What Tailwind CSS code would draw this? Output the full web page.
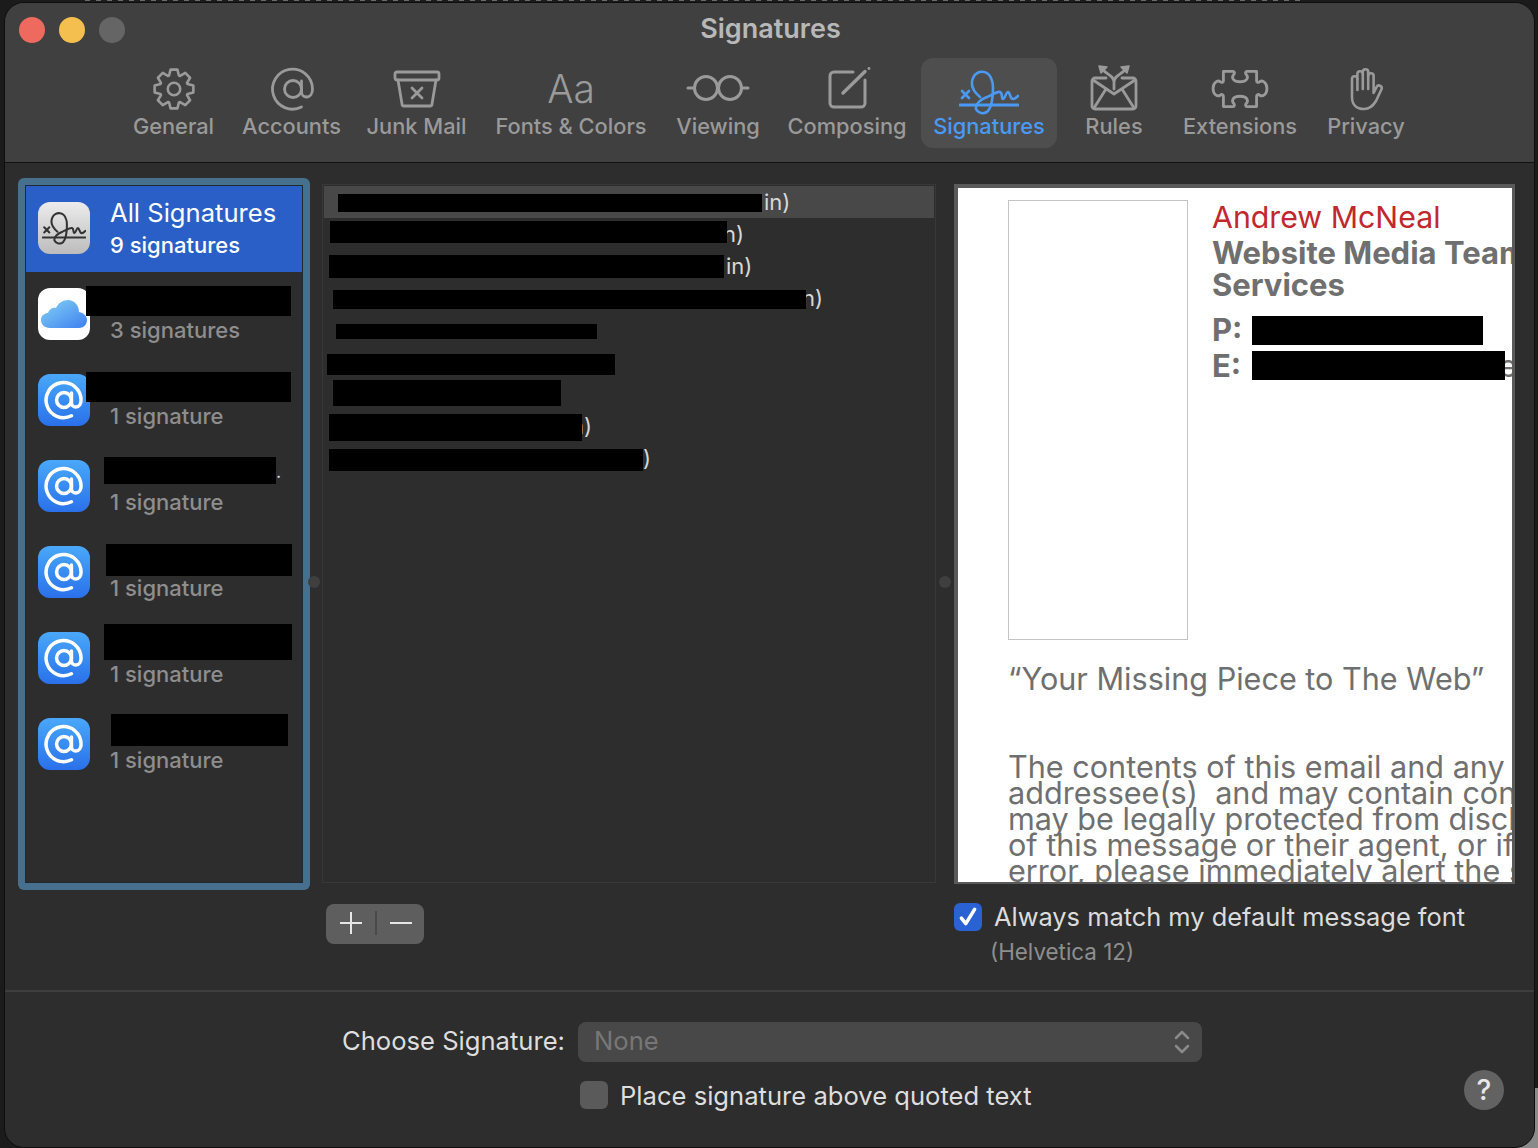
<!DOCTYPE html>
<html lang="en">
<head>
  <meta charset="UTF-8" />
  <title>Signatures</title>
  <script src="https://cdn.jsdelivr.net/npm/@tailwindcss/browser@4"></script>
</head>
<body class="bg-[#1b1b1b] font-['Inter','Liberation_Sans',sans-serif]">
<div class="relative w-[1538px] h-[1148px] overflow-hidden">
  <div class="absolute right-0 bottom-0 w-[40px] h-[60px] bg-[#8a8a8a]"></div>
  <!-- bit of the window behind, showing over the top edge -->
  <div class="absolute top-0 left-[85px] w-[1215px] h-[1px] bg-[repeating-linear-gradient(90deg,#6a6a6a_0_5px,transparent_5px_11px)]"></div>

  <!-- window -->
  <div class="relative ml-[4px] mt-[2px] w-[1531px] h-[1146px] rounded-t-[20px] rounded-b-[20px] border border-[#0e0e0e] overflow-hidden bg-[#2d2d2d] flex flex-col">

    <!-- toolbar -->
    <div class="relative h-[160px] bg-[#404040] border-b border-[#111111] shrink-0">
      <div class="flex gap-[14px] pl-[14px] pt-[14px]">
        <div class="w-[26px] h-[26px] rounded-full bg-[#ee6a5f]"></div>
        <div class="w-[26px] h-[26px] rounded-full bg-[#f5bf4f]"></div>
        <div class="w-[26px] h-[26px] rounded-full bg-[#656565]"></div>
      </div>
      <div class="absolute top-[8px] left-0 w-full text-center text-[27px] leading-[36px] font-semibold text-[#b8b8b8]"><span class="relative left-[1px]">Signatures</span></div>

      <div class="absolute top-[55px] left-[116px] flex text-[21.8px] leading-[28px] font-medium text-[#9a9a9a]">
        <!-- General -->
        <div class="w-[105px] flex flex-col items-center">
          <div class="h-[62px] flex items-center justify-center">
            <svg width="46" height="46" viewBox="0 0 48 48" fill="none" stroke="#9a9a9a" stroke-width="2.7" stroke-linejoin="round"><g transform="translate(24 24)"><polygon points="-5.13,-14.1 -3.56,-20.19 3.56,-20.19 5.13,-14.1 6.34,-13.59 11.76,-16.79 16.79,-11.76 13.59,-6.34 14.1,-5.13 20.19,-3.56 20.19,3.56 14.1,5.13 13.59,6.34 16.79,11.76 11.76,16.79 6.34,13.59 5.13,14.1 3.56,20.19 -3.56,20.19 -5.13,14.1 -6.34,13.59 -11.76,16.79 -16.79,11.76 -13.59,6.34 -14.1,5.13 -20.19,3.56 -20.19,-3.56 -14.1,-5.13 -13.59,-6.34 -16.79,-11.76 -11.76,-16.79 -6.34,-13.59"/><circle r="6.5"/></g></svg>
          </div>
          <div class="mt-[-8px]">General</div>
        </div>
        <!-- Accounts -->
        <div class="ml-[5px] w-[121px] flex flex-col items-center">
          <div class="h-[62px] flex items-center justify-center">
            <svg width="48" height="48" viewBox="-1 0 48 48" fill="none" stroke="#9a9a9a" stroke-width="2.8" stroke-linecap="round"><circle cx="24" cy="24" r="8.5"/><path d="M32.5 16v11a5 5 0 0 0 5 5c4 0 6-4 6-8a20 20 0 1 0-11 18"/></svg>
          </div>
          <div class="mt-[-8px]">Accounts</div>
        </div>
        <!-- Junk Mail -->
        <div class="ml-[3px] w-[123px] flex flex-col items-center">
          <div class="h-[62px] flex items-center justify-center">
            <svg width="50" height="48" viewBox="0 0 50 48" fill="none" stroke="#9a9a9a" stroke-width="2.8" stroke-linecap="round" stroke-linejoin="round"><rect x="3" y="7" width="44" height="8" rx="2"/><path d="M6 15l4 24a2 2 0 0 0 2 2h26a2 2 0 0 0 2-2l4-24"/><path d="M20 23l10 10M30 23L20 33"/></svg>
          </div>
          <div class="mt-[-8px]">Junk Mail</div>
        </div>
        <!-- Fonts -->
        <div class="ml-[4px] w-[178px] flex flex-col items-center">
          <div class="h-[62px] flex items-center justify-center text-[39px] font-light leading-[48px]">Aa</div>
          <div class="mt-[-8px]">Fonts &amp; Colors</div>
        </div>
        <!-- Viewing -->
        <div class="ml-[5px] w-[106px] flex flex-col items-center">
          <div class="h-[62px] flex items-center justify-center">
            <svg width="64" height="48" viewBox="0 0 64 48" fill="none" stroke="#9a9a9a" stroke-width="3" stroke-linecap="round"><circle cx="20" cy="23" r="11.5"/><circle cx="44" cy="23" r="11.5"/><path d="M31.5 22h1M2 23h6M56 23h6"/></svg>
          </div>
          <div class="mt-[-8px]">Viewing</div>
        </div>
        <!-- Composing -->
        <div class="ml-[5px] w-[142px] flex flex-col items-center">
          <div class="h-[62px] flex items-center justify-center">
            <svg width="48" height="48" viewBox="-1 0 48 48" fill="none" stroke="#9a9a9a" stroke-width="3" stroke-linecap="round"><path d="M29 7H10a4 4 0 0 0-4 4v27a4 4 0 0 0 4 4h27a4 4 0 0 0 4-4V15"/><path d="M19 28L41 6.5" stroke-width="3.4"/><circle cx="45" cy="3.5" r="1.4" fill="#9a9a9a" stroke="none"/></svg>
          </div>
          <div class="mt-[-8px]">Composing</div>
        </div>
        <!-- Signatures (selected) -->
        <div class="ml-[3px] w-[136px] h-[90px] rounded-[12px] bg-[#4e4e4e] flex flex-col items-center text-[#4a9af5]">
          <div class="h-[62px] flex items-center justify-center pt-[6px]">
            <svg width="60" height="48" viewBox="0 0 60 48" fill="none" stroke="#4a9af5" stroke-width="2.6" stroke-linecap="round" stroke-linejoin="round"><path d="M1 37H59" stroke-width="3"/><path d="M3 23l7 7M10 23l-7 7"/><path d="M21 29C15 24 11 17 14 10C16 5 21 3 25 4C31 5 34 12 34 20C34 29 33 38 29 43C25 47 19 45 17 41C16 36 22 31 28 29C33 27 38 23 41 24C44 25 42 31 44 31C46 31 47 24 49 24C51 24 51 31 54 31C56 31 58 29 59 28"/></svg>
          </div>
          <div class="mt-[-8px]">Signatures</div>
        </div>
        <!-- Rules -->
        <div class="ml-[5px] w-[104px] flex flex-col items-center">
          <div class="h-[62px] flex items-center justify-center">
            <svg width="48" height="48" viewBox="0 0 48 48" fill="none" stroke="#9a9a9a" stroke-width="2.8" stroke-linecap="round" stroke-linejoin="round"><path d="M16 13H5a3 3 0 0 0-3 3v25a3 3 0 0 0 3 3h38a3 3 0 0 0 3-3V16a3 3 0 0 0-3-3H32"/><path d="M3 15l21 14 21-14M4 43l12-19M44 43L32 24"/><path d="M24 24V17C24 11 18 10 13 5M24 17C24 11 30 10 35 5"/><path d="M9 1l8 1-6 6zM39 1l-8 1 6 6z" fill="#9a9a9a" stroke-width="1.5"/></svg>
          </div>
          <div class="mt-[-8px]">Rules</div>
        </div>
        <!-- Extensions -->
        <div class="ml-[5px] w-[138px] flex flex-col items-center">
          <div class="h-[62px] flex items-center justify-center">
            <svg width="58" height="40" viewBox="0 0 56 38" fill="none" stroke="#9a9a9a" stroke-width="2.7" stroke-linejoin="round"><path d="M12 2h9c2 0 2 2 1 3c-2 2-2 7 6 7c8 0 8-5 6-7c-1-1-1-3 1-3h9V11c0 2 2 2 3 1c3-2 7 1 7 6.5c0 5.5-4 8.5-7 6.5c-1-1-3-1-3 1V36h-9c-2 0-2-2-1-3c2-2 2-7-6-7c-8 0-8 5-6 7c1 1 1 3-1 3h-9V26c0-2-2-2-3-1c-3 2-7-1-7-6.5c0-5.5 4-8.5 7-6.5c1 1 3 1 3-1z"/></svg>
          </div>
          <div class="mt-[-8px]">Extensions</div>
        </div>
        <!-- Privacy -->
        <div class="ml-[7px] w-[100px] flex flex-col items-center">
          <div class="h-[62px] flex items-center justify-center">
            <svg width="33" height="43" viewBox="0 0 33 43" fill="none" stroke="#9a9a9a" stroke-width="2.6" stroke-linecap="round" stroke-linejoin="round"><path d="M2 29V11a2.7 2.7 0 0 1 5.4 0V6a2.7 2.7 0 0 1 5.4 0V4a2.7 2.7 0 0 1 5.4 0V8a2.7 2.7 0 0 1 5.4 0V25l3-6c1.5-3 6-1 5 2L26 33C23 38 19 41 14 41C7 41 2 37 2 29Z"/><path d="M7.4 11V22M12.8 6V21M18.2 4V21"/></svg>
          </div>
          <div class="mt-[-8px]">Privacy</div>
        </div>
      </div>
    </div>

    <!-- panels -->
    <div class="relative h-[829px] shrink-0 flex border-b-2 border-[#3e3e3e]">

      <!-- accounts list -->
      <div class="ml-[13px] mt-[15px] w-[292px] h-[712px] rounded-[6px] bg-[#47708f] p-[7px] shrink-0">
        <div class="h-full bg-[#2d2d2d] border border-[#1f2a33]">
          <div class="relative h-[86px] bg-[#2a5fc7] flex items-center pl-[12px]">
            <div class="w-[52px] h-[52px] mt-[-2px] rounded-[12px] bg-gradient-to-b from-[#ececec] to-[#bcbcbc] flex items-center justify-center">
              <svg width="44" height="36" viewBox="0 0 60 48" fill="none" stroke="#333333" stroke-width="2.8" stroke-linecap="round" stroke-linejoin="round"><path d="M1 37H59"/><path d="M3 23l7 7M10 23l-7 7"/><path d="M21 29C15 24 11 17 14 10C16 5 21 3 25 4C31 5 34 12 34 20C34 29 33 38 29 43C25 47 19 45 17 41C16 36 22 31 28 29C33 27 38 23 41 24C44 25 42 31 44 31C46 31 47 24 49 24C51 24 51 31 54 31C56 31 58 29 59 28"/></svg>
            </div>
            <div class="ml-[20px] mt-[-1px]">
              <div class="relative top-[-1px] text-[25.6px] leading-[32px] text-white">All Signatures</div>
              <div class="text-[22px] leading-[30px] font-medium text-white">9 signatures</div>
            </div>
          </div>
          <div class="relative h-[86px] flex items-center pl-[12px]">
            <div class="w-[52px] h-[52px] mt-[-2px] rounded-[12px] bg-white flex items-center justify-center">
              <svg width="46" height="30" viewBox="0 0 46 30"><defs><linearGradient id="cloud" x1="0" y1="0" x2="1" y2="1"><stop offset="0" stop-color="#86d3f5"/><stop offset="1" stop-color="#3d7ff0"/></linearGradient></defs><path fill="url(#cloud)" d="M9 29C3 29 0 25 0 21C0 16 4 14 7 14C8 10 12 8 15 9C17 4 22 1 27 1C33 1 38 6 38 13C43 14 46 17 46 21C46 26 42 29 38 29Z"/></svg>
            </div>
            <div class="ml-[20px] pt-[30px] text-[22px] leading-[30px] font-medium text-[#8e8e8e]">3 signatures</div>
            <div class="absolute left-[60px] top-[14px] w-[205px] h-[30px] bg-black"></div>
          </div>
          <div class="relative h-[86px] flex items-center pl-[12px]">
            <div class="w-[52px] h-[52px] mt-[-2px] rounded-[12px] bg-gradient-to-b from-[#4aa8fa] to-[#2b70ea] flex items-center justify-center">
              <svg width="42" height="42" viewBox="0 0 48 48" fill="none" stroke="#ffffff" stroke-width="4" stroke-linecap="round"><circle cx="24" cy="24" r="8.5"/><path d="M32.5 16v11a5 5 0 0 0 5 5c4 0 6-4 6-8a20 20 0 1 0-11 18"/></svg>
            </div>
            <div class="ml-[20px] pt-[30px] text-[22px] leading-[30px] font-medium text-[#8e8e8e]">1 signature</div>
            <div class="absolute left-[60px] top-[14px] w-[205px] h-[30px] bg-black"></div>
          </div>
          <div class="relative h-[86px] flex items-center pl-[12px]">
            <div class="w-[52px] h-[52px] mt-[-2px] rounded-[12px] bg-gradient-to-b from-[#4aa8fa] to-[#2b70ea] flex items-center justify-center">
              <svg width="42" height="42" viewBox="0 0 48 48" fill="none" stroke="#ffffff" stroke-width="4" stroke-linecap="round"><circle cx="24" cy="24" r="8.5"/><path d="M32.5 16v11a5 5 0 0 0 5 5c4 0 6-4 6-8a20 20 0 1 0-11 18"/></svg>
            </div>
            <div class="ml-[20px] pt-[30px] text-[22px] leading-[30px] font-medium text-[#8e8e8e]">1 signature</div>
            <div class="absolute left-[78px] top-[13px] w-[172px] h-[27px] bg-black"></div>
            <div class="absolute left-[250px] top-[16px] text-[18px] leading-[24px] text-[#d8d8d8]">.</div>
          </div>
          <div class="relative h-[86px] flex items-center pl-[12px]">
            <div class="w-[52px] h-[52px] mt-[-2px] rounded-[12px] bg-gradient-to-b from-[#4aa8fa] to-[#2b70ea] flex items-center justify-center">
              <svg width="42" height="42" viewBox="0 0 48 48" fill="none" stroke="#ffffff" stroke-width="4" stroke-linecap="round"><circle cx="24" cy="24" r="8.5"/><path d="M32.5 16v11a5 5 0 0 0 5 5c4 0 6-4 6-8a20 20 0 1 0-11 18"/></svg>
            </div>
            <div class="ml-[20px] pt-[30px] text-[22px] leading-[30px] font-medium text-[#8e8e8e]">1 signature</div>
            <div class="absolute left-[80px] top-[14px] w-[186px] h-[32px] bg-black"></div>
          </div>
          <div class="relative h-[86px] flex items-center pl-[12px]">
            <div class="w-[52px] h-[52px] mt-[-2px] rounded-[12px] bg-gradient-to-b from-[#4aa8fa] to-[#2b70ea] flex items-center justify-center">
              <svg width="42" height="42" viewBox="0 0 48 48" fill="none" stroke="#ffffff" stroke-width="4" stroke-linecap="round"><circle cx="24" cy="24" r="8.5"/><path d="M32.5 16v11a5 5 0 0 0 5 5c4 0 6-4 6-8a20 20 0 1 0-11 18"/></svg>
            </div>
            <div class="ml-[20px] pt-[30px] text-[22px] leading-[30px] font-medium text-[#8e8e8e]">1 signature</div>
            <div class="absolute left-[78px] top-[8px] w-[188px] h-[36px] bg-black"></div>
          </div>
          <div class="relative h-[86px] flex items-center pl-[12px]">
            <div class="w-[52px] h-[52px] mt-[-2px] rounded-[12px] bg-gradient-to-b from-[#4aa8fa] to-[#2b70ea] flex items-center justify-center">
              <svg width="42" height="42" viewBox="0 0 48 48" fill="none" stroke="#ffffff" stroke-width="4" stroke-linecap="round"><circle cx="24" cy="24" r="8.5"/><path d="M32.5 16v11a5 5 0 0 0 5 5c4 0 6-4 6-8a20 20 0 1 0-11 18"/></svg>
            </div>
            <div class="ml-[20px] pt-[30px] text-[22px] leading-[30px] font-medium text-[#8e8e8e]">1 signature</div>
            <div class="absolute left-[85px] top-[12px] w-[177px] h-[32px] bg-black"></div>
          </div>
        </div>
      </div>

      <!-- signature names -->
      <div class="ml-[12px] mt-[21px] w-[614px] shrink-0">
        <div class="h-[699px] border border-[#383838] px-[1px] pt-[1px] text-[22px] leading-[32px] text-[#d8d8d8]">
          <div class="relative h-[32px] bg-[#484848]"><span class="absolute left-[440px]">in)</span><span class="absolute left-[14px] top-[8px] w-[424px] h-[18px] bg-black"></span></div>
          <div class="relative h-[32px]"><span class="absolute left-[399px]">n)</span><span class="absolute left-[6px] top-[3px] w-[397px] h-[22px] bg-black"></span></div>
          <div class="relative h-[32px]"><span class="absolute left-[402px]">in)</span><span class="absolute left-[5px] top-[5px] w-[395px] h-[23px] bg-black"></span></div>
          <div class="relative h-[32px]"><span class="absolute left-[478px]">n)</span><span class="absolute left-[9px] top-[8px] w-[473px] h-[19px] bg-black"></span></div>
          <div class="relative h-[32px]"><span class="absolute left-[12px] top-[10px] w-[261px] h-[15px] bg-black"></span></div>
          <div class="relative h-[32px]"><span class="absolute left-[3px] top-[8px] w-[288px] h-[21px] bg-black"></span></div>
          <div class="relative h-[32px]"><span class="absolute left-[9px] top-[2px] w-[228px] h-[26px] bg-black"></span></div>
          <div class="relative h-[32px]"><span class="absolute left-[247px]">n)</span><span class="absolute left-[5px] top-[4px] w-[253px] h-[27px] bg-black"></span></div>
          <div class="relative h-[32px]"><span class="absolute left-[306px]">n)</span><span class="absolute left-[5px] top-[7px] w-[314px] h-[22px] bg-black"></span></div>
        </div>
        <div class="ml-[4px] mt-[21px] w-[98px] h-[40px] rounded-[8px] bg-[#5e5e5e] flex items-center">
          <div class="w-[49px] flex justify-center mb-[2px]">
            <svg width="22" height="22" viewBox="0 0 22 22" stroke="#e6e6e6" stroke-width="2"><path d="M0 11H22M11 0V22"/></svg>
          </div>
          <div class="w-[2px] h-[24px] mb-[2px] bg-[#4a4a4a]"></div>
          <div class="flex-1 flex justify-center mb-[2px]">
            <svg width="22" height="22" viewBox="0 0 22 22" stroke="#e6e6e6" stroke-width="2"><path d="M0 11H22"/></svg>
          </div>
        </div>
      </div>

      <!-- preview -->
      <div class="ml-[18px] mt-[21px] w-[561px] shrink-0">
        <div class="h-[700px] border-[3px] border-l-[4px] border-t-[4px] border-b-[2px] border-[#5a5a5a] bg-white overflow-hidden pl-[50px] pt-[12px] text-[#6f6f6f]">
          <div class="flex h-[440px]">
            <div class="w-[180px] h-[440px] border border-[#c4c4c4] shrink-0"></div>
            <div class="relative ml-[24px] whitespace-nowrap text-[31px] leading-[32px]">
              <div class="text-[#c1272d] mt-[1px] text-[30.3px]">Andrew McNeal</div>
              <div class="font-bold mt-[4px]">Website Media Team</div>
              <div class="font-bold">Services</div>
              <div class="font-bold mt-[11px] leading-[36px]">P:</div>
              <div class="font-bold leading-[36px] relative">E:<span class="absolute font-normal left-[287px] top-0">e</span></div>
              <div class="absolute left-[40px] top-[116px] w-[231px] h-[29px] bg-black"></div>
              <div class="absolute left-[40px] top-[151px] w-[253px] h-[29px] bg-black"></div>
            </div>
          </div>
          <div class="mt-[19px] text-[30.6px] leading-[40px] whitespace-nowrap">“Your Missing Piece to The Web”</div>
          <div class="mt-[55px] text-[30.6px] leading-[26px] whitespace-pre">The contents of this email and any
addressee(s)  and may contain confidential
may be legally protected from disclosure
of this message or their agent, or if
error, please immediately alert the sender</div>
        </div>
        <div class="mt-[18px] flex items-center">
          <div class="w-[28px] h-[28px] rounded-[6px] bg-[#2b62d3] flex items-center justify-center shrink-0">
            <svg width="22" height="22" viewBox="0 0 20 20" fill="none" stroke="#ffffff" stroke-width="3.2" stroke-linecap="round" stroke-linejoin="round"><path d="M4 11l4 5 8-13"/></svg>
          </div>
          <div class="ml-[12px] text-[25.4px] leading-[30px] text-[#dcdcdc] whitespace-nowrap">Always match my default message font</div>
        </div>
        <div class="ml-[36px] mt-[5px] text-[22.4px] leading-[30px] text-[#8e8e8e]">(Helvetica 12)</div>
      </div>

      <div class="absolute left-[303px] top-[413px] w-[12px] h-[12px] rounded-full bg-[#3f3f3f]"></div>
      <div class="absolute left-[934px] top-[413px] w-[12px] h-[12px] rounded-full bg-[#3f3f3f]"></div>
    </div>

    <!-- footer -->
    <div class="relative flex-1">
      <div class="pl-[337px] pt-[30px] flex items-center">
        <div class="w-[236px] pb-[2px] text-[25.6px] leading-[38px] text-[#dedede] whitespace-nowrap">Choose Signature:</div>
        <div class="w-[624px] h-[40px] rounded-[8px] bg-[#484848] flex items-center justify-between pl-[16px] pr-[11px]">
          <span class="pb-[2px] text-[25.6px] text-[#777777]">None</span>
          <svg width="18" height="28" viewBox="0 0 18 28" fill="none" stroke="#8a8a8a" stroke-width="2.5" stroke-linecap="round" stroke-linejoin="round"><path d="M3 10l6-6 6 6M3 18l6 6 6-6"/></svg>
        </div>
      </div>
      <div class="pl-[575px] mt-[17px] flex items-center">
        <div class="w-[28px] h-[28px] rounded-[6px] bg-[#5a5a5a]"></div>
        <div class="ml-[12px] pt-[2px] text-[25.6px] leading-[30px] text-[#dedede] whitespace-nowrap">Place signature above quoted text</div>
      </div>
      <div class="absolute left-[1459px] top-[78px] w-[40px] h-[40px] rounded-full bg-[#626262] text-[#e8e8e8] text-[28px] leading-[40px] text-center font-medium">?</div>
    </div>
  </div>
</div>
</body>
</html>
